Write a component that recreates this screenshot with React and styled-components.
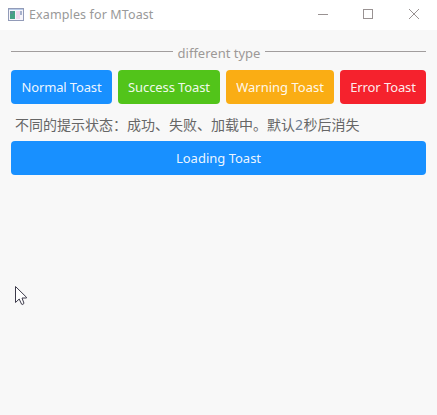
import React from "react";
import styled, { createGlobalStyle } from "styled-components";

const GlobalStyle = createGlobalStyle`
  * { box-sizing: border-box; }
  body { margin: 0; background: #f8f8f8; overflow: hidden; }
`;

const Window = styled.div`
  position: relative;
  width: 437px;
  height: 415px;
  background: #f8f8f8;
  font-family: "Noto Sans", "Noto Sans CJK SC", sans-serif;
  white-space: nowrap;
`;

const TitleBar = styled.header`
  display: flex;
  align-items: center;
  height: 30px;
  padding-left: 8px;
  background: #fff;
  color: #999;
`;

const AppIcon = styled.svg`
  flex: none;
  width: 16px;
  height: 14px;
  margin-right: 5px;
`;

const Title = styled.span`
  flex: 1;
  font-size: 12.5px;
  line-height: 30px;
  letter-spacing: 0.12px;
`;

const WindowControl = styled.span`
  display: flex;
  align-items: center;
  justify-content: center;
  width: ${(p) => p.$width}px;
  height: 30px;
  svg { display: block; margin-top: -2px; }
`;

const Content = styled.main`
  display: flex;
  flex-direction: column;
  padding: 11px 11px 0;
`;

const Divider = styled.div`
  display: flex;
  height: 29px;
  color: #9d9997;
`;

const Line = styled.span`
  width: ${(p) => p.$width}px;
  height: 1px;
  margin-top: 10px;
  background: #a19d9d;
`;

const DividerLabel = styled.span`
  flex: 1;
  text-align: center;
  font-size: 13px;
  line-height: 25px;
`;

const ButtonRow = styled.div`
  display: flex;
  gap: 6px;
`;

const Button = styled.button`
  display: block;
  width: ${(p) => p.$width}px;
  height: 34px;
  padding: 0;
  border: 0;
  border-radius: 4px;
  background: ${(p) => p.$color};
  color: rgba(255, 255, 255, 0.93);
  font-family: "Noto Sans", sans-serif;
  font-weight: 400;
  font-size: 13px;
  line-height: 34px;
  letter-spacing: ${(p) => p.$spacing || 0}px;
  white-space: nowrap;
`;

const Description = styled.p`
  margin: 0;
  height: 37px;
  padding-left: 4px;
  color: #666;
  font-family: "Noto Sans CJK SC", sans-serif;
  font-weight: 400;
  font-size: 14px;
  line-height: 41px;
`;

const Count = styled.span`
  display: inline-block;
  width: 8.5px;
  color: #6c7f98;
  font-family: "Noto Sans", sans-serif;
`;

const Cursor = styled.svg`
  position: absolute;
  left: 15px;
  top: 285px;
  width: 14px;
  height: 21px;
`;

const toasts = [
  { label: "Normal Toast", color: "#1890ff", width: 101, spacing: -0.15 },
  { label: "Success Toast", color: "#52c41a", width: 102, spacing: -0.1 },
  { label: "Warning Toast", color: "#faad14", width: 108, spacing: 0 },
  { label: "Error Toast", color: "#f5222d", width: 86, spacing: -0.1 },
];

export default function App() {
  return (
    <Window>
      <GlobalStyle />
      <TitleBar>
        <AppIcon viewBox="0 0 16 14" shapeRendering="crispEdges">
          <rect x="0.5" y="0.5" width="15" height="12" fill="#f6f5fa" stroke="#929bb8" />
          <rect x="1" y="1" width="14" height="1" fill="#b8cbe8" />
          <rect x="2" y="3" width="5" height="8" fill="#46a083" />
          <rect x="2" y="3" width="3" height="3" fill="#5c8e96" />
          <rect x="8" y="3" width="4" height="8" fill="#f0d9ed" />
          <rect x="12" y="3" width="2" height="4" fill="#a8b2cc" />
        </AppIcon>
        <Title>Examples for MToast</Title>
        <WindowControl $width={45}>
          <svg width="10" height="10"><path d="M0 5.5H10" stroke="#999292" /></svg>
        </WindowControl>
        <WindowControl $width={45}>
          <svg width="10" height="10"><rect x="0.5" y="0.5" width="9" height="9" fill="none" stroke="#999292" /></svg>
        </WindowControl>
        <WindowControl $width={47}>
          <svg width="10" height="10"><path d="M0 0L10 10M10 0L0 10" stroke="#999292" /></svg>
        </WindowControl>
      </TitleBar>
      <Content>
        <Divider>
          <Line $width={162} />
          <DividerLabel>different type</DividerLabel>
          <Line $width={161} />
        </Divider>
        <ButtonRow>
          {toasts.map((t) => (
            <Button key={t.label} $color={t.color} $width={t.width} $spacing={t.spacing}>{t.label}</Button>
          ))}
        </ButtonRow>
        <Description>不同的提示状态：成功、失败、加载中。默认<Count>2</Count>秒后消失</Description>
        <Button $color="#1890ff" $width={415}>Loading Toast</Button>
      </Content>
      <Cursor viewBox="0 0 14 21">
        <path d="M0.5 1.5V17.5L4.2 14L6.6 19.2Q8 20 9 18.3L7 13H11.5V12.3Z" fill="#fff" stroke="#3d3b4b" />
      </Cursor>
    </Window>
  );
}
